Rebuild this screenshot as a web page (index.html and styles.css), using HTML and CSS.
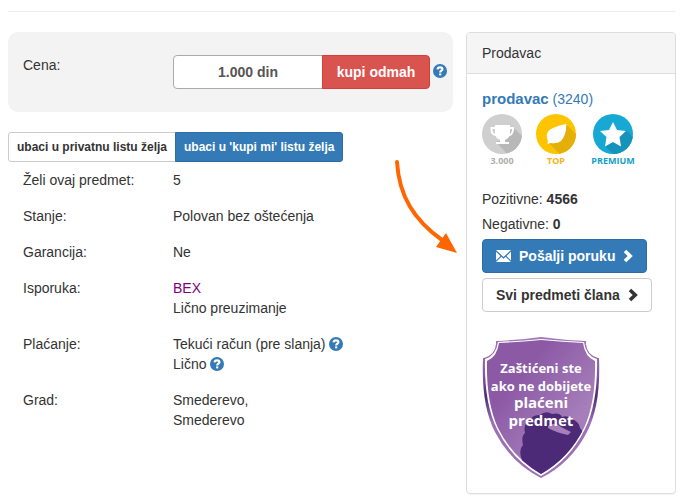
FILE: index.html
```html
<!DOCTYPE html>
<html lang="sr">
<head>
  <meta charset="UTF-8" />
  <meta name="viewport" content="width=device-width, initial-scale=1.0"/>
  <title>Predmet</title>
  <link rel="stylesheet" href="styles.css">
</head>
<body>
  <!-- shared icons -->
  <svg class="sprite" aria-hidden="true">
    <symbol id="help" viewBox="0 0 14 14">
      <circle cx="7" cy="7" r="7" fill="#337ab7"/>
      <path d="M4.6 5.4C4.7 3.8 5.7 3.3 7 3.3C8.5 3.3 9.4 4 9.4 5.2C9.4 6.8 7.2 6.6 7.2 8.5" fill="none" stroke="#fff" stroke-width="2.2"/>
      <path d="M6.1 9.4h2.2v2H6.1z" fill="#fff"/>
    </symbol>
    <symbol id="chevron" viewBox="0 0 10 14">
      <path d="M2 2L7.2 7L2 12" fill="none" stroke="currentColor" stroke-width="3.6"/>
    </symbol>
  </svg>

  <div class="page">
    <hr>
    <div class="row">
      <main class="item">
        <div class="price">
          <label for="price">Cena:</label>
          <div class="price-group">
            <input type="text" id="price" value="1.000 din" readonly>
            <button type="button" class="btn buy">kupi odmah</button>
          </div>
          <svg class="help"><use href="#help"/></svg>
        </div>

        <div class="wishlist">
          <button type="button" class="btn btn-small">ubaci u privatnu listu želja</button>
          <button type="button" class="btn btn-small primary">ubaci u 'kupi mi' listu želja</button>
        </div>

        <dl class="details">
          <dt>Želi ovaj predmet:</dt>
          <dd>5</dd>
          <dt>Stanje:</dt>
          <dd>Polovan bez oštećenja</dd>
          <dt>Garancija:</dt>
          <dd>Ne</dd>
          <dt>Isporuka:</dt>
          <dd><a href="#" class="bex">BEX</a><br>Lično preuzimanje</dd>
          <dt>Plaćanje:</dt>
          <dd>Tekući račun (pre slanja) <svg class="help"><use href="#help"/></svg><br>Lično <svg class="help"><use href="#help"/></svg></dd>
          <dt>Grad:</dt>
          <dd>Smederevo,<br>Smederevo</dd>
        </dl>

        <svg class="arrow" viewBox="0 0 66 98" aria-hidden="true">
          <path d="M5 4C7 38 22 62 50 82" fill="none" stroke="#ff6600" stroke-width="4" stroke-linecap="round"/>
          <path d="M54 75L65 95L44 89Z" fill="#ff6600"/>
        </svg>
      </main>

      <aside class="seller">
        <div class="seller-heading">Prodavac</div>
        <div class="seller-body">
          <a href="#" class="seller-name"><strong>prodavac</strong> (3240)</a>

          <div class="badges">
            <svg width="40" height="54" viewBox="0 0 40 54">
              <defs>
                <clipPath id="disc"><circle cx="20" cy="20" r="20"/></clipPath>
              </defs>
              <g clip-path="url(#disc)">
                <path d="M0 0h40v40H0z" fill="#cfcfcf"/>
                <path d="M31 13L45 27V45H30L14 28L24 24Z" fill="#b8b8b8"/>
              </g>
              <path d="M13 11H28V19Q28 24 23 26V28H27V30H14V28H18V26Q13 24 13 19Z" fill="#fff"/>
              <path d="M13 14H9.500V16Q10 21 14 21M28 14H31V16Q30 21 27 21" fill="none" stroke="#fff" stroke-width="2"/>
              <text x="20" y="50" class="badge-text" fill="#adadad">3.000</text>
            </svg>
            <svg width="40" height="54" viewBox="0 0 40 54">
              <g clip-path="url(#disc)">
                <path d="M0 0h40v40H0z" fill="#ffc400"/>
                <path d="M30 10L46 26V45H28L13 29Z" fill="#e5af09"/>
              </g>
              <path d="M30.500 10Q30 22 25 27Q21 30 15 29L11.500 30Q12.500 27 11 24Q9.500 17 17 14Q23 11 30.500 10Z" fill="#fff"/>
              <text x="20" y="50" class="badge-text" fill="#f9b219">TOP</text>
            </svg>
            <svg width="46" height="54" viewBox="-3 0 46 54">
              <g clip-path="url(#disc)">
                <path d="M0 0h40v40H0z" fill="#17a9d3"/>
                <path d="M33 16L48 31V45H25L12 32Z" fill="#1593bb"/>
              </g>
              <path d="M20 8L24 16L33 17L26.500 23L28 32.500L20 28L12 32.500L13.500 23L7 17L16 16Z" fill="#fff"/>
              <text x="20" y="50" class="badge-text" fill="#149fc7">PREMIUM</text>
            </svg>
          </div>

          <p class="rating">Pozitivne: <strong>4566</strong></p>
          <p class="rating">Negativne: <strong>0</strong></p>

          <div class="actions">
            <button type="button" class="btn primary">
              <svg class="envelope" viewBox="0 0 15 12">
                <path d="M0 0H15L7.500 7Z M0 1.800L4.500 6L0 10.400Z M15 1.800L10.500 6L15 10.400Z M0 12L5.300 6.800L7.500 8.800L9.700 6.800L15 12Z" fill="currentColor"/>
              </svg>
              Pošalji poruku
              <svg class="chevron"><use href="#chevron"/></svg>
            </button>
            <button type="button" class="btn">
              Svi predmeti člana
              <svg class="chevron"><use href="#chevron"/></svg>
            </button>
          </div>

          <svg class="shield" viewBox="0 0 118 141">
            <defs>
              <linearGradient id="purple" x1="0" y1="0" x2="1" y2="1">
                <stop offset="0.300" stop-color="#8c5aa5"/>
                <stop offset="0.700" stop-color="#a67fba"/>
              </linearGradient>
              <linearGradient id="edge" x1="0" y1="0" x2="0" y2="1">
                <stop offset="0" stop-color="#a57ab9"/>
                <stop offset="0.250" stop-color="#8c5aa5"/>
                <stop offset="0.420" stop-color="#4d2a77"/>
                <stop offset="0.600" stop-color="#9c70b2"/>
              </linearGradient>
              <clipPath id="inside">
                <path d="M17 6Q37 5 59 3Q81 5 101 6Q103 20 113 24Q114 65 102 91Q87 121 59 137Q31 121 16 91Q4 65 5 24Q15 20 17 6Z"/>
              </clipPath>
            </defs>
            <path d="M14 4Q37 3 59 0Q81 3 104 4V7Q105 18 116 21H117Q119 68 105 95Q89 126 59 141Q29 126 13 95Q-1 68 1 21H2Q13 18 14 7Z" fill="url(#edge)"/>
            <path d="M16 5Q37 4 59 2Q81 4 102 5Q104 19 115 22Q116 66 103 92Q88 123 59 139Q30 123 15 92Q2 66 3 22Q14 19 16 5Z" fill="#fff"/>
            <g clip-path="url(#inside)">
              <path d="M0 0h118v141H0z" fill="url(#purple)"/>
              <path d="M37 141L40 123Q36 113 41 108Q39 99 43 96Q41 87 47 84Q51 77 58 78Q64 73 70 77Q78 75 80 80Q86 78 89 82Q97 84 98 91Q103 96 101 104L90 141Z" fill="#4d2a77"/>
              <path d="M66 89Q73 84 79 90L89 95L86 98Q75 96 66 91Z" fill="#a67fba"/>
            </g>
            <text x="59" y="36" class="shield-text">Zaštićeni ste</text>
            <text x="59" y="54" class="shield-text">ako ne dobijete</text>
            <text x="59" y="71" class="shield-text big">plaćeni</text>
            <text x="59" y="89" class="shield-text big">predmet</text>
          </svg>
        </div>
      </aside>
    </div>
  </div>
</body>
</html>
```
FILE: styles.css
```css
* {
  box-sizing: border-box;
}

body {
  margin: 0;
  padding: 11px 14px 9px 8px;
  font-family: "Liberation Sans", Arial, sans-serif;
  font-size: 14px;
  line-height: 20px;
  color: #333;
  background: #fff;
}

a {
  color: #337ab7;
  text-decoration: none;
}

.sprite {
  display: none;
}

hr {
  margin: 0 0 20px;
  border: 0;
  border-top: 1px solid #eee;
}

.row {
  display: flex;
  align-items: flex-start;
  gap: 13px;
}

.item {
  position: relative;
  flex: 1;
  min-width: 0;
}

.price {
  display: grid;
  grid-template-columns: 147px minmax(0, 1fr) 14px;
  column-gap: 3px;
  align-items: start;
  padding: 23px 6px 23px 15px;
  border-radius: 10px;
  background: #f3f3f3;
}

.price label {
  display: block;
}

.price-group {
  display: flex;
}

.price input {
  flex: 1;
  min-width: 0;
  height: 34px;
  border: 1px solid #aaa;
  border-radius: 4px 0 0 4px;
  background: #fff;
  color: #555;
  font: bold 14px/20px "Liberation Sans", Arial, sans-serif;
  text-align: center;
}

.help {
  width: 14px;
  height: 14px;
  vertical-align: -2px;
}

.price .help {
  margin-top: 9px;
}

.btn {
  padding: 6px 13px;
  border: 1px solid #ccc;
  border-radius: 4px;
  background: #fff;
  color: #333;
  font: bold 14px/20px "Liberation Sans", Arial, sans-serif;
  white-space: nowrap;
  cursor: pointer;
}

.btn.primary {
  border-color: #2e6da4;
  background: #337ab7;
  color: #fff;
}

.btn.buy {
  width: 108px;
  margin-left: -1px;
  padding: 6px 0;
  border-color: #d43f3a;
  border-radius: 0 4px 4px 0;
  background: #d9534f;
  color: #fff;
}

.wishlist {
  display: flex;
  margin: 20px 0 8px;
}

.btn-small {
  padding: 5px 8px;
  border-radius: 3px 0 0 3px;
  font-size: 12px;
  line-height: 18px;
}

.btn-small + .btn-small {
  margin-left: -1px;
  border-radius: 0 3px 3px 0;
}

.details {
  display: grid;
  grid-template-columns: 150px 1fr;
  row-gap: 16px;
  margin: 0;
  padding: 0 15px;
}

.details dd {
  margin: 0;
}

.bex {
  color: #800080;
}

.arrow {
  position: absolute;
  top: 126px;
  right: -5px;
  width: 66px;
  height: 98px;
}

.seller {
  width: 210px;
  border: 1px solid #ddd;
  border-radius: 4px;
  box-shadow: 0 1px 1px rgba(0,0,0,0.05);
}

.seller-heading {
  padding: 10px 15px;
  border-bottom: 1px solid #ddd;
  border-radius: 3px 3px 0 0;
  background: #f5f5f5;
}

.seller-body {
  padding: 15px;
}

.seller-name {
  display: block;
}

.seller-name strong {
  font-size: 15px;
}

.badges {
  display: flex;
  gap: 14px;
  margin: 5px 0 21px;
}

.badge-text {
  font: bold 9px "Open Sans", sans-serif;
  text-anchor: middle;
}

.rating {
  margin: 0 0 5px;
}

.actions {
  display: flex;
  flex-direction: column;
  align-items: flex-start;
  gap: 5px;
}

.actions .btn {
  display: flex;
  align-items: center;
  gap: 8px;
}

.envelope {
  width: 15px;
  height: 12px;
}

.chevron {
  width: 10px;
  height: 14px;
}

.shield {
  display: block;
  width: 118px;
  height: 141px;
  margin-top: 25px;
}

.shield-text {
  font: bold 13px/1 "Open Sans", sans-serif;
  fill: #fff;
  text-anchor: middle;
}

.shield-text.big {
  font-size: 15px;
}
```
